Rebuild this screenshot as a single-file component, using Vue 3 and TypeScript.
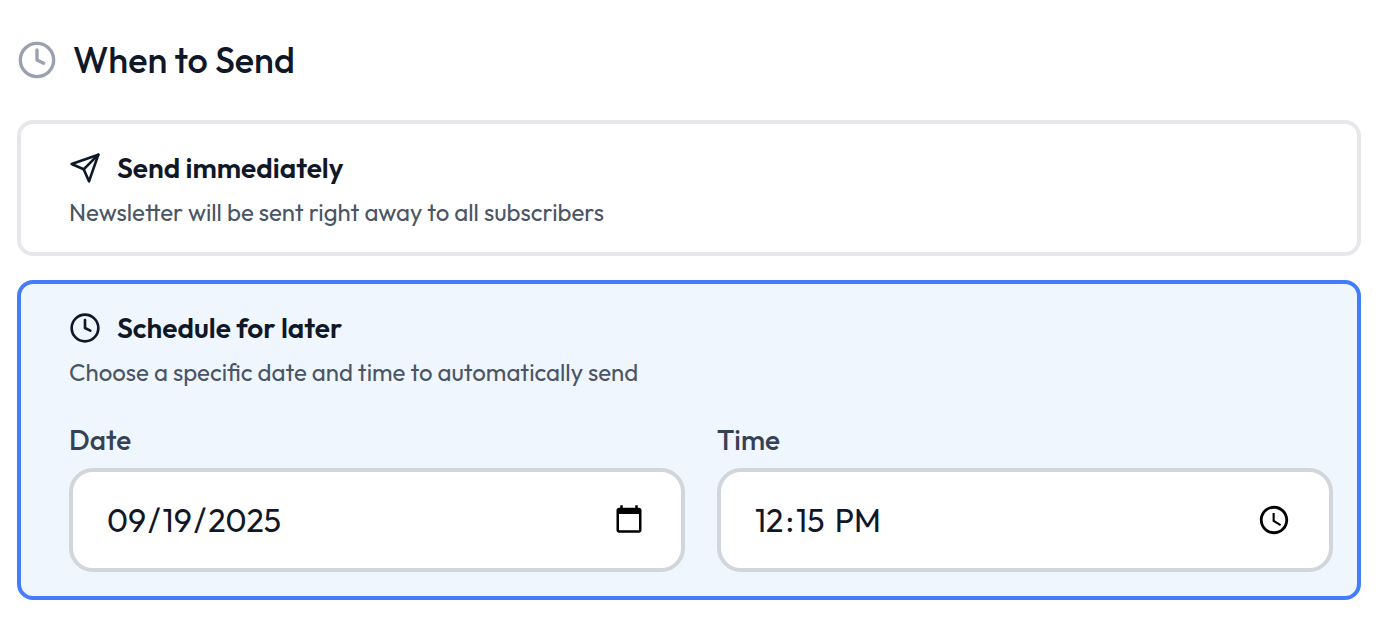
<script setup lang="ts">
import { ref } from 'vue'

type SendMode = 'now' | 'later'

const mode = ref<SendMode>('later')
const date = ref('2025-09-19')
const time = ref('12:15')
</script>

<template>
  <main class="panel">
    <h1 class="heading">
      <svg class="heading-icon" viewBox="0 0 24 24" aria-hidden="true">
        <circle cx="12" cy="12" r="10" />
        <path d="M12 6v6l4 2" />
      </svg>
      When to Send
    </h1>

    <div class="options" role="radiogroup" aria-label="When to Send">
      <section class="card" :class="{ selected: mode === 'now' }">
        <label class="option">
          <input v-model="mode" class="radio" type="radio" name="send-mode" value="now" />
          <span class="title">
            <svg class="icon" viewBox="0 0 24 24" aria-hidden="true">
              <path d="m22 2-7 20-4-9-9-4Z" />
              <path d="M22 2 11 13" />
            </svg>
            Send immediately
          </span>
          <span class="description">Newsletter will be sent right away to all subscribers</span>
        </label>
      </section>

      <section class="card" :class="{ selected: mode === 'later' }">
        <label class="option">
          <input v-model="mode" class="radio" type="radio" name="send-mode" value="later" />
          <span class="title">
            <svg class="icon" viewBox="0 0 24 24" aria-hidden="true">
              <circle cx="12" cy="12" r="10" />
              <path d="M12 6v6l4 2" />
            </svg>
            Schedule for later
          </span>
          <span class="description">Choose a specific date and time to automatically send</span>
        </label>
        <div class="fields">
          <div class="field">
            <label class="field-label" for="send-date">Date</label>
            <input id="send-date" v-model="date" class="input" type="date" />
          </div>
          <div class="field">
            <label class="field-label" for="send-time">Time</label>
            <input id="send-time" v-model="time" class="input input-time" type="time" />
          </div>
        </div>
      </section>
    </div>
  </main>
</template>

<style>
body {
  margin: 0;
  background: #fff;
}
</style>

<style scoped>
* {
  box-sizing: border-box;
}

.panel {
  padding: 40px 19px 22px 17px;
  color: #101828;
  font-family: Outfit, Lato, sans-serif;
}

.heading {
  display: flex;
  align-items: center;
  gap: 16px;
  margin: 0 0 40px;
  font-size: 36px;
  font-weight: 500;
  line-height: 40px;
}

svg {
  flex: none;
  fill: none;
  stroke: currentColor;
  stroke-width: 2;
  stroke-linecap: round;
  stroke-linejoin: round;
}

.heading-icon {
  width: 40px;
  height: 40px;
  color: #99a1af;
}

.options {
  display: flex;
  flex-direction: column;
  gap: 24px;
}

.card {
  padding: 24px 24px 24px 48px;
  border: 4px solid #e5e7eb;
  border-radius: 16px;
}

.card.selected {
  border-color: #437dfc;
  background: #eff6fe;
}

.option {
  display: flex;
  position: relative;
  flex-direction: column;
  gap: 8px;
  cursor: pointer;
}

.radio {
  position: absolute;
  width: 1px;
  height: 1px;
  margin: 0;
  opacity: 0;
}

.title {
  display: flex;
  align-items: center;
  gap: 16px;
  font-size: 28px;
  font-weight: 600;
  line-height: 40px;
}

.icon {
  width: 32px;
  height: 32px;
}

.description {
  color: #4a5565;
  font-size: 24px;
  line-height: 32px;
}

.fields {
  display: grid;
  grid-template-columns: 1fr 1fr;
  gap: 32px;
  margin-top: 32px;
}

.field {
  display: flex;
  flex-direction: column;
  gap: 8px;
}

.field-label {
  color: #364153;
  font-size: 28px;
  font-weight: 500;
  line-height: 40px;
}

.input {
  width: 100%;
  height: 104px;
  padding: 0 36px 0 32px;
  border: 4px solid #d1d5dc;
  border-radius: 24px;
  background: #fff;
  color: #101828;
  font-family: inherit;
  font-size: 32px;
}

.input-time {
  padding-right: 38px;
}

.input::-webkit-calendar-picker-indicator {
  width: 32px;
  height: 32px;
  padding: 0;
}

.input-time::-webkit-calendar-picker-indicator {
  width: 34px;
  height: 34px;
}

.input::-webkit-datetime-edit-month-field,
.input::-webkit-datetime-edit-day-field,
.input::-webkit-datetime-edit-year-field,
.input::-webkit-datetime-edit-hour-field,
.input::-webkit-datetime-edit-minute-field {
  padding: 0 2px;
}

.input::-webkit-datetime-edit-ampm-field {
  padding: 0 2px 0 5px;
}
</style>
